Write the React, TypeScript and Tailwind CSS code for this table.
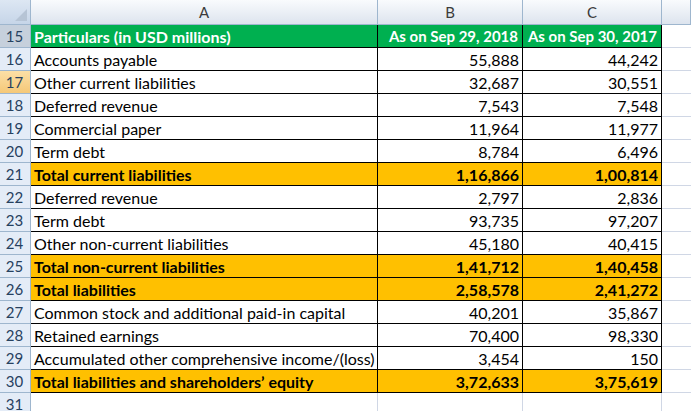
import React from "react";

type Row = {
  n: number;
  label: string;
  b: string;
  c: string;
  kind?: "head" | "total";
};

const rows: Row[] = [
  { n: 15, label: "Particulars (in USD millions)", b: "As on Sep 29, 2018", c: "As on Sep 30, 2017", kind: "head" },
  { n: 16, label: "Accounts payable", b: "55,888", c: "44,242" },
  { n: 17, label: "Other current liabilities", b: "32,687", c: "30,551" },
  { n: 18, label: "Deferred revenue", b: "7,543", c: "7,548" },
  { n: 19, label: "Commercial paper", b: "11,964", c: "11,977" },
  { n: 20, label: "Term debt", b: "8,784", c: "6,496" },
  { n: 21, label: "Total current liabilities", b: "1,16,866", c: "1,00,814", kind: "total" },
  { n: 22, label: "Deferred revenue", b: "2,797", c: "2,836" },
  { n: 23, label: "Term debt", b: "93,735", c: "97,207" },
  { n: 24, label: "Other non-current liabilities", b: "45,180", c: "40,415" },
  { n: 25, label: "Total non-current liabilities", b: "1,41,712", c: "1,40,458", kind: "total" },
  { n: 26, label: "Total liabilities", b: "2,58,578", c: "2,41,272", kind: "total" },
  { n: 27, label: "Common stock and additional paid-in capital", b: "40,201", c: "35,867" },
  { n: 28, label: "Retained earnings", b: "70,400", c: "98,330" },
  { n: 29, label: "Accumulated other comprehensive income/(loss)", b: "3,454", c: "150" },
  { n: 30, label: "Total liabilities and shareholders\u2019 equity", b: "3,72,633", c: "3,75,619", kind: "total" },
];

const cols = "grid grid-cols-[31px_347px_145px_139px_1fr]";

function RowHeader({ n }: { n: number }) {
  // 15 is the selected row, 17 the hovered one
  const bg =
    n === 15
      ? "bg-[#c6d0dc]"
      : n === 17
      ? "bg-gradient-to-b from-[#fbdfa6] to-[#f5c877]"
      : "bg-[#e4ecf7]";
  return (
    <div
      className={`${bg} h-[23px] border-r border-b border-[#9eb6ce] flex items-center justify-center text-[#27415f] text-[15px] pr-[1px]`}
    >
      {n}
    </div>
  );
}

function DataRow({ row }: { row: Row }) {
  const fill =
    row.kind === "head"
      ? "bg-[#00b050] text-white font-bold"
      : row.kind === "total"
      ? "bg-[#ffc000] text-black font-bold"
      : "bg-white text-black";
  const cell = `${fill} h-[23px] border-r border-b border-black flex items-center pt-[1px] whitespace-nowrap`;
  const num = row.kind === "head" ? "text-[15px] pr-[4px]" : "pr-[3px]";
  return (
    <div className={cols}>
      <RowHeader n={row.n} />
      <div className={`${cell} pl-[3px]`}>{row.label}</div>
      <div className={`${cell} justify-end ${num}`}>{row.b}</div>
      <div className={`${cell} justify-end ${num}`}>{row.c}</div>
      <div className="h-[23px] border-b border-[#d0d7e5] bg-white" />
    </div>
  );
}

export default function App() {
  return (
    <div
      className="w-[691px] h-[411px] overflow-hidden bg-white text-[16px] leading-none"
      style={{ fontFamily: "Lato, 'Open Sans', sans-serif" }}
    >
      <div className={cols}>
        <div className="relative h-[25px] border-r border-b border-[#9eb6ce] bg-gradient-to-b from-[#dde7f3] to-[#c6d5e8]">
          <div className="absolute right-[3px] bottom-[3px] w-0 h-0 border-l-[12px] border-l-transparent border-b-[12px] border-b-[#b6c4d5]" />
        </div>
        {["A", "B", "C", ""].map((h, i) => (
          <div
            key={i}
            className="h-[25px] border-r border-b border-[#9eb6ce] bg-gradient-to-b from-[#f9fbfd] to-[#dde4ee] flex items-center justify-center text-[#3b3b3b] text-[15px]"
          >
            {h}
          </div>
        ))}
      </div>
      {rows.map((r) => (
        <DataRow key={r.n} row={r} />
      ))}
      <div className={cols}>
        <RowHeader n={31} />
        <div className="h-[23px] border-r border-b border-[#d0d7e5]" />
        <div className="h-[23px] border-r border-b border-[#d0d7e5]" />
        <div className="h-[23px] border-r border-b border-[#d0d7e5]" />
        <div className="h-[23px] border-b border-[#d0d7e5]" />
      </div>
    </div>
  );
}
